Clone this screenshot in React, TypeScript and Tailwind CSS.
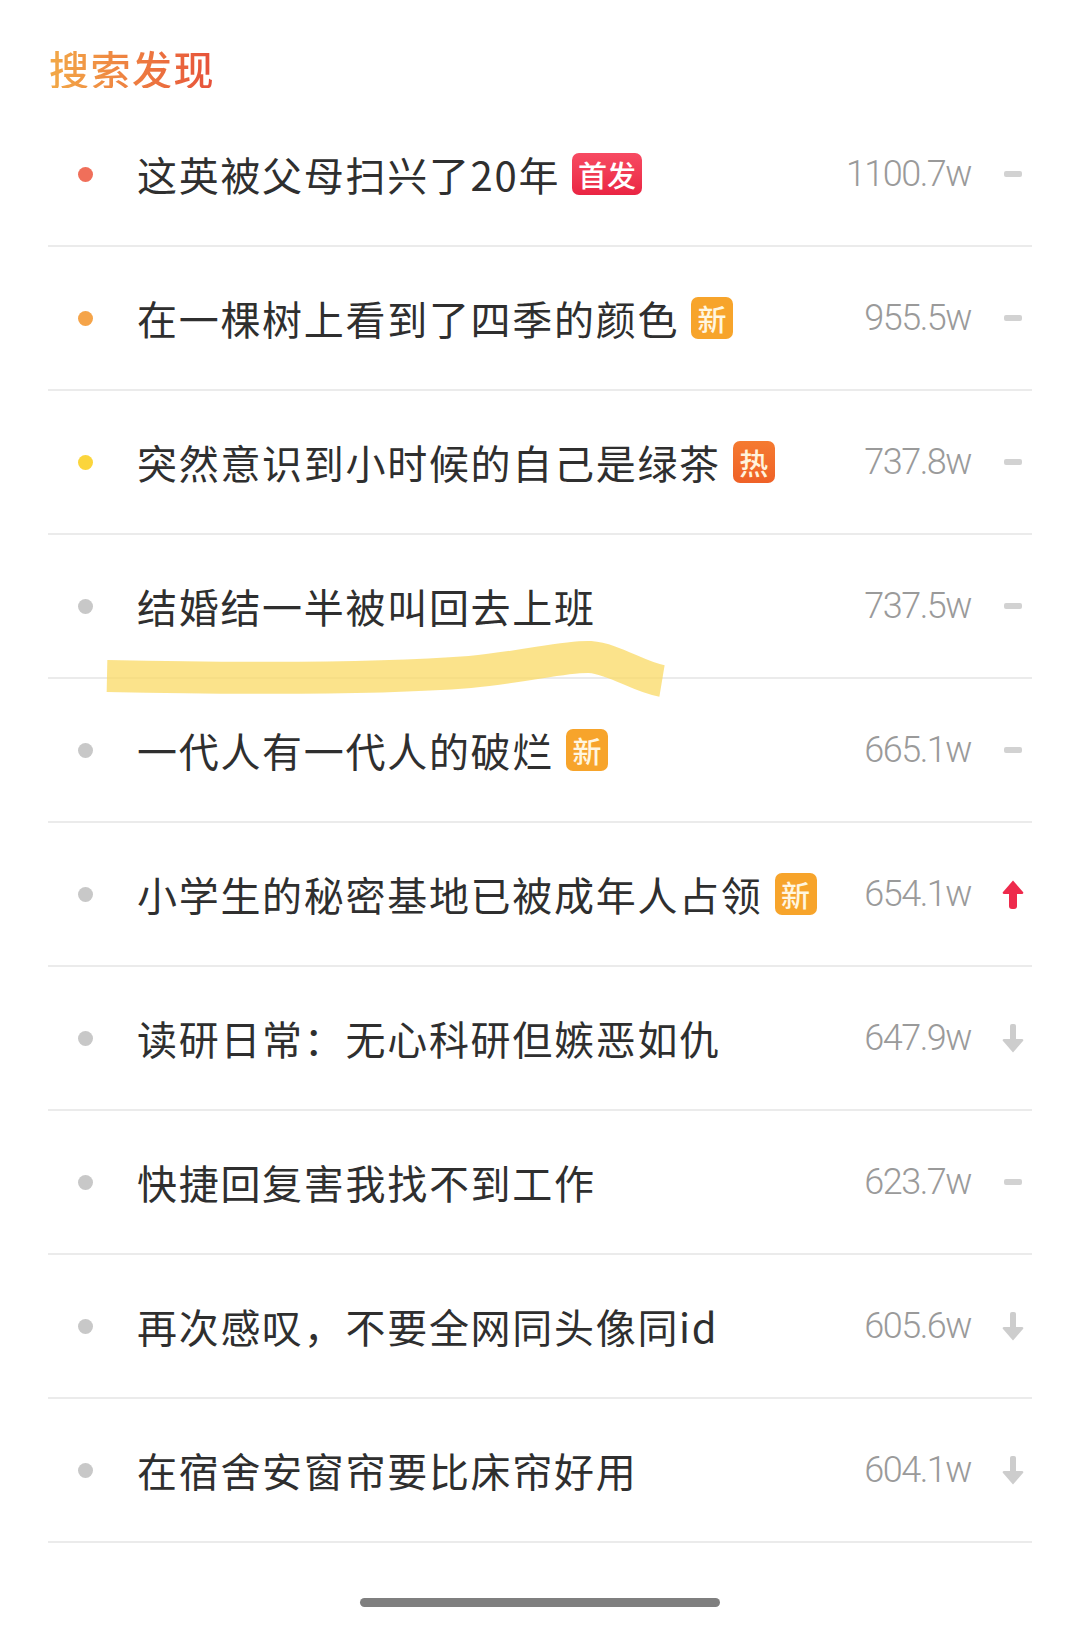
import React from "react";

type Trend = "flat" | "up" | "down";
type Badge = "first" | "new" | "hot" | null;

const rows: { title: string; badge: Badge; num: string; trend: Trend; dot: string }[] = [
  { title: "这英被父母扫兴了20年", badge: "first", num: "1100.7w", trend: "flat", dot: "bg-[#f06f5a]" },
  { title: "在一棵树上看到了四季的颜色", badge: "new", num: "955.5w", trend: "flat", dot: "bg-[#f5a449]" },
  { title: "突然意识到小时候的自己是绿茶", badge: "hot", num: "737.8w", trend: "flat", dot: "bg-[#fbd53c]" },
  { title: "结婚结一半被叫回去上班", badge: null, num: "737.5w", trend: "flat", dot: "bg-[#c8c8c8]" },
  { title: "一代人有一代人的破烂", badge: "new", num: "665.1w", trend: "flat", dot: "bg-[#c8c8c8]" },
  { title: "小学生的秘密基地已被成年人占领", badge: "new", num: "654.1w", trend: "up", dot: "bg-[#c8c8c8]" },
  { title: "读研日常：无心科研但嫉恶如仇", badge: null, num: "647.9w", trend: "down", dot: "bg-[#c8c8c8]" },
  { title: "快捷回复害我找不到工作", badge: null, num: "623.7w", trend: "flat", dot: "bg-[#c8c8c8]" },
  { title: "再次感叹，不要全网同头像同id", badge: null, num: "605.6w", trend: "down", dot: "bg-[#c8c8c8]" },
  { title: "在宿舍安窗帘要比床帘好用", badge: null, num: "604.1w", trend: "down", dot: "bg-[#c8c8c8]" },
];

const cjk = { fontFamily: '"Noto Sans CJK SC", "Noto Sans", sans-serif' };

function BadgeTag({ kind }: { kind: Badge }) {
  if (!kind) return null;
  if (kind === "first")
    return (
      <span
        style={cjk}
        className="ml-[12px] flex h-[42px] items-center rounded-[7px] bg-gradient-to-b from-[#f74a62] to-[#ea2443] px-[6px] text-[29px] font-medium leading-none text-white"
      >
        首发
      </span>
    );
  if (kind === "new")
    return (
      <span
        style={cjk}
        className="ml-[12px] flex h-[42px] w-[42px] items-center justify-center rounded-[7px] bg-[#f7a42b] text-[29px] font-medium leading-none text-[#fff6e0]"
      >
        新
      </span>
    );
  return (
    <span
      style={cjk}
      className="ml-[12px] flex h-[42px] w-[42px] items-center justify-center rounded-[7px] bg-gradient-to-b from-[#f57a30] to-[#ef6127] text-[29px] font-medium leading-none text-[#fff3dc]"
    >
      热
    </span>
  );
}

function TrendIcon({ t }: { t: Trend }) {
  if (t === "flat") return <span className="block h-[6px] w-[18px] rounded-[2px] bg-[#d2d2d2]" />;
  if (t === "up")
    return (
      <svg width="22" height="29" viewBox="0 0 22 29">
        <path d="M11 0.5 L21.2 12.2 Q21.8 14 19.8 14 L2.2 14 Q0.2 14 0.8 12.2 Z" fill="#ee2a4c" />
        <rect x="7" y="10" width="8" height="19" rx="3" fill="#ee2a4c" />
      </svg>
    );
  return (
    <svg width="22" height="29" viewBox="0 0 22 29">
      <rect x="8" y="0" width="6" height="18" rx="2" fill="#cdcdcd" />
      <path d="M11 28.5 L21.2 16.8 Q21.8 15 19.8 15 L2.2 15 Q0.2 15 0.8 16.8 Z" fill="#cdcdcd" />
    </svg>
  );
}

export default function App() {
  return (
    <div className="relative h-[1627px] w-[1080px] overflow-hidden bg-white">
      <div className="h-[103px] px-[49px] pt-[48px]">
        <span
          style={cjk}
          className="inline-block bg-gradient-to-r from-[#f2a947] to-[#e64f3a] bg-clip-text text-[40px] font-medium leading-[40px] tracking-[1.5px] text-transparent"
        >
          搜索发现
        </span>
      </div>
      <div className="mx-[48px]">
        {rows.map((r, i) => (
          <div
            key={i}
            className="flex h-[144px] items-center border-b-2 border-[#ebebeb] pl-[30px] pr-[8px]"
          >
            <span className={`block h-[15px] w-[15px] shrink-0 rounded-full ${r.dot}`} />
            <div className="ml-[44px] flex min-w-0 flex-1 items-center">
              <span style={cjk} className="whitespace-nowrap text-[40px] leading-[48px] tracking-[1.7px] text-[#2f2f2f]">
                {r.title}
              </span>
              <BadgeTag kind={r.badge} />
            </div>
            <span
              style={{ fontFamily: "Roboto, 'Open Sans', sans-serif" }}
              className="text-[36px] font-light leading-none tracking-[-1.5px] text-[#9a9a9a]"
            >
              {r.num}
            </span>
            <span className="ml-[31px] flex w-[22px] items-center justify-center">
              <TrendIcon t={r.trend} />
            </span>
          </div>
        ))}
      </div>
      <div className="flex h-[84px] justify-center pt-[55px]">
        <span className="block h-[9px] w-[360px] rounded-full bg-[#7f7f7f]" />
      </div>
      <svg
        className="pointer-events-none absolute left-0 top-0"
        width="1080"
        height="1627"
        viewBox="0 0 1080 1627"
      >
        <path
          d="M 107 676 C 250 679, 380 679, 470 672 C 530 666, 565 656, 590 657 C 615 659, 638 677, 662 681"
          fill="none"
          stroke="#f9d85e"
          strokeOpacity="0.72"
          strokeWidth="32"
          strokeLinecap="butt"
          strokeLinejoin="round"
        />
      </svg>
    </div>
  );
}
